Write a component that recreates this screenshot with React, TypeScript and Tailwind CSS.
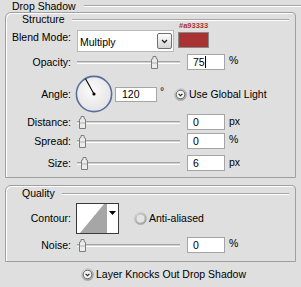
import React from 'react';

const Thumb = () => (
  <svg width="9" height="14" viewBox="0 0 9 14">
    <path d="M1.5 13.5 L1.5 5 Q1.5 3.5 3 3.5 L3 1.5 L6 1.5 L6 3.5 Q7.5 3.5 7.5 5 L7.5 13.5 Z" fill="#ececec" stroke="#7d7d7d" strokeWidth="1" />
    <line x1="2" y1="8" x2="7" y2="8" stroke="#b0b0b0" strokeWidth="1" />
  </svg>
);

const Slider = ({ thumbLeft }: { thumbLeft: string }) => (
  <div className="relative w-[103px] h-[14px] flex items-center">
    <div className="w-full h-[3px] border-t border-[#a3a3a3] bg-[#d3d3d3] border-b border-b-white" />
    <div className={`absolute top-0 ${thumbLeft}`}>
      <Thumb />
    </div>
  </div>
);

const RoundCheck = ({ checked }: { checked: boolean }) => (
  <svg width="13" height="13" viewBox="0 0 13 13">
    <defs>
      <radialGradient id={checked ? 'rgc' : 'rgu'} cx="0.4" cy="0.35" r="0.7">
        <stop offset="0" stopColor="#eeeeee" />
        <stop offset="1" stopColor="#9a9a9a" />
      </radialGradient>
    </defs>
    <circle cx="6.5" cy="6.5" r="6.3" fill={`url(#${checked ? 'rgc' : 'rgu'})`} />
    {checked ? (
      <>
        <circle cx="6.5" cy="6.5" r="4.3" fill="#f2f2f2" stroke="#5a5a5a" strokeWidth="0.9" />
        <path d="M4.6 5.8 L6.5 7.7 L8.4 5.8" fill="none" stroke="#2a2a2a" strokeWidth="1.2" />
      </>
    ) : (
      <circle cx="6.5" cy="6.5" r="4.5" fill="#e4e4e4" stroke="#b0b0b0" strokeWidth="0.8" />
    )}
  </svg>
);

const Field = ({ value, caret }: { value: string; caret?: boolean }) => (
  <div className="ml-[7px] w-[38px] h-[16px] border border-[#a5a5a5] bg-white flex items-center pl-[5px] leading-none">
    {value}
    {caret && <span className="inline-block w-px h-[12px] bg-black" />}
  </div>
);

const Legend = ({ text }: { text: string }) => (
  <div className="flex items-center h-[13px]">
    <span className="pl-[16px] leading-none">{text}</span>
    <div className="flex-1 ml-[7px] mr-[6px] h-[2px] border-t border-[#a6a6a6] border-b border-b-white" />
  </div>
);

const Label = ({ text }: { text: string }) => (
  <div className="w-[64px] text-right leading-none shrink-0">{text}</div>
);

export default function App() {
  return (
    <div className="w-[301px] h-[287px] bg-[#dfdfdf] overflow-hidden font-['Liberation_Sans',Arial,sans-serif] text-[10.5px] text-black">
      {/* title */}
      <div className="flex items-center h-[12px]">
        <span className="pl-[12px] leading-none">Drop Shadow</span>
        <div className="flex-1 ml-[8px] h-[2px] border-t border-[#a6a6a6] border-b border-b-white" />
      </div>

      {/* Structure */}
      <div className="ml-[5px] w-[291px] h-[166px] border border-[#9f9f9f] rounded-tl-[6px] rounded-tr-[4px] shadow-[inset_1px_1px_0_#fff]">
        <Legend text="Structure" />

        <div className="flex items-start h-[26px] pl-[1px]">
          <div className="mt-[6px]"><Label text="Blend Mode:" /></div>
          <div className="ml-[6px] mt-[4px] w-[97px] h-[22px] border border-[#b9b9b9] bg-white flex items-center justify-between">
            <span className="pl-[2px] pt-[3px] leading-none">Multiply</span>
            <div className="mr-[1px] w-[15px] h-[16px] border border-[#6f6f6f] rounded-[2px] bg-gradient-to-b from-white to-[#d4d4d4] flex items-center justify-center">
              <svg width="7" height="5" viewBox="0 0 7 5">
                <path d="M1 1 L3.5 3.5 L6 1" fill="none" stroke="#222" strokeWidth="1.3" />
              </svg>
            </div>
          </div>
          <div className="ml-[4px] -mt-[4px] flex flex-col">
            <span className="h-[8px] leading-[8px] text-[7.5px] font-bold text-[#a93333] pl-[1px]">#a93333</span>
            <div className="mt-[2px] w-[31px] h-[16px] border border-[#8a8a8a] bg-[#a93333]" />
          </div>
        </div>

        <div className="flex items-center h-[20px] pl-[1px]">
          <Label text="Opacity:" />
          <div className="ml-[6px]"><Slider thumbLeft="left-[73px]" /></div>
          <Field value="75" caret />
          <span className="ml-[4px] -mt-[3px] leading-none">%</span>
        </div>

        <div className="flex items-center h-[41px] pl-[1px] pt-[3px]">
          <Label text="Angle:" />
          <svg className="ml-[4px]" width="38" height="38" viewBox="0 0 38 38">
            <defs>
              <radialGradient id="dial" cx="0.45" cy="0.4" r="0.65">
                <stop offset="0" stopColor="#fbfbfb" />
                <stop offset="1" stopColor="#e2e2e2" />
              </radialGradient>
            </defs>
            <circle cx="19" cy="19" r="17.6" fill="url(#dial)" stroke="#5a6e9c" strokeWidth="1.6" />
            <line x1="19" y1="19" x2="10.5" y2="3.8" stroke="#000" strokeWidth="1.1" />
            <circle cx="19" cy="19" r="1.6" fill="#000" />
          </svg>
          <div className="ml-[2px] w-[42px] h-[15px] border border-[#a5a5a5] bg-white flex items-center pl-[6px] leading-none">120</div>
          <span className="w-[17px] pl-[3px] -mt-[6px] leading-none">°</span>
          <RoundCheck checked />
          <span className="ml-[2px] leading-none">Use Global Light</span>
        </div>

        <div className="flex items-center h-[18px] pl-[1px]">
          <Label text="Distance:" />
          <div className="ml-[6px]"><Slider thumbLeft="left-[1px]" /></div>
          <Field value="0" />
          <span className="ml-[4px] -mt-[2px] leading-none">px</span>
        </div>

        <div className="flex items-center h-[20px] pl-[1px]">
          <Label text="Spread:" />
          <div className="ml-[6px]"><Slider thumbLeft="left-[1px]" /></div>
          <Field value="0" />
          <span className="ml-[4px] -mt-[3px] leading-none">%</span>
        </div>

        <div className="flex items-center h-[24px] pl-[1px]">
          <Label text="Size:" />
          <div className="ml-[6px]"><Slider thumbLeft="left-[3px]" /></div>
          <Field value="6" />
          <span className="ml-[4px] -mt-[2px] leading-none">px</span>
        </div>
      </div>

      {/* Quality */}
      <div className="mt-[7px] ml-[5px] w-[291px] h-[77px] border border-[#9f9f9f] rounded-tl-[6px] rounded-tr-[4px] shadow-[inset_1px_1px_0_#fff]">
        <div className="h-[1px]" />
        <Legend text="Quality" />

        <div className="flex items-center h-[36px] pl-[1px]">
          <Label text="Contour:" />
          <div className="ml-[5px] w-[43px] h-[31px] border border-[#3a3a3a] bg-white flex">
            <svg width="30" height="29" viewBox="0 0 30 29">
              <rect width="30" height="29" fill="#fff" />
              <polygon points="3,29 27,0 30,0 30,29" fill="#a6a6a6" />
            </svg>
            <div className="flex-1 flex items-start justify-center pt-[7px]">
              <svg width="7" height="4" viewBox="0 0 7 4">
                <polygon points="0,0 7,0 3.5,4" fill="#000" />
              </svg>
            </div>
          </div>
          <div className="ml-[15px] flex items-center">
            <RoundCheck checked={false} />
          </div>
          <span className="ml-[2px] leading-none">Anti-aliased</span>
        </div>

        <div className="flex items-center h-[18px] pl-[1px]">
          <Label text="Noise:" />
          <div className="ml-[6px]"><Slider thumbLeft="left-[1px]" /></div>
          <Field value="0" />
          <span className="ml-[4px] -mt-[3px] leading-none">%</span>
        </div>
      </div>

      <div className="flex items-center h-[24px] pl-[81px]">
        <RoundCheck checked />
        <span className="ml-[2px] leading-none">Layer Knocks Out Drop Shadow</span>
      </div>
    </div>
  );
}
